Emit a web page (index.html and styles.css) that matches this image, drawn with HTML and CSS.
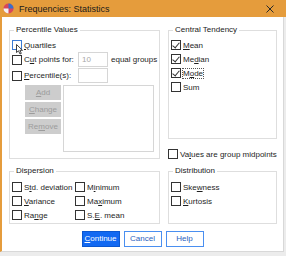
FILE: index.html
```html
<!DOCTYPE html>
<html lang="en">
<head>
    <meta charset="UTF-8">
    <title>Frequencies: Statistics</title>
    <link rel="stylesheet" href="styles.css">
</head>
<body>
<div class="window">
    <!-- 标题栏 -->
    <div class="titlebar">
        <svg class="app-icon" width="11" height="11" viewBox="0 0 11 11">
            <circle cx="5.5" cy="5.5" r="5" fill="#d9465a"/>
            <path d="M5.5 0.5 A5 5 0 0 1 10.5 5.5 L5.5 5.5 Z" fill="#3b6fc9"/>
            <path d="M0.5 5.5 A5 5 0 0 0 5.5 10.5 L5.5 5.5 Z" fill="#f2f2f2"/>
        </svg>
        <span class="title">Frequencies: Statistics</span>
        <svg class="close" width="8" height="8" viewBox="0 0 8 8">
            <path d="M0.5 0.5 L7.5 7.5 M7.5 0.5 L0.5 7.5" stroke="#2a2a2a" stroke-width="1"/>
        </svg>
    </div>

    <div class="content">
        <div class="top">
            <!-- 百分位值 -->
            <fieldset class="group percentile">
                <legend>Percentile Values</legend>
                <div class="row">
                    <span class="box hover"></span><span><u>Q</u>uartiles</span>
                </div>
                <div class="row input-row">
                    <span class="check-label"><span class="box"></span><span>C<u>u</u>t points for:</span></span>
                    <span class="field muted">10</span>
                    <span>equal groups</span>
                </div>
                <div class="row input-row second">
                    <span class="check-label"><span class="box"></span><span><u>P</u>ercentile(s):</span></span>
                    <span class="field"></span>
                </div>
                <div class="list-area">
                    <div class="list-buttons">
                        <span class="btn-disabled"><u>A</u>dd</span>
                        <span class="btn-disabled"><u>C</u>hange</span>
                        <span class="btn-disabled">Re<u>m</u>ove</span>
                    </div>
                    <div class="listbox"></div>
                </div>
            </fieldset>

            <div class="right-col">
                <!-- 集中趋势 -->
                <fieldset class="group central">
                    <legend>Central Tendency</legend>
                    <div class="row"><span class="box checked"></span><span><u>M</u>ean</span></div>
                    <div class="row"><span class="box checked"></span><span>Me<u>d</u>ian</span></div>
                    <div class="row"><span class="box checked"></span><span class="focus">M<u>o</u>de</span></div>
                    <div class="row"><span class="box"></span><span>Sum</span></div>
                </fieldset>
                <div class="row midpoints"><span class="box"></span><span>Va<u>l</u>ues are group midpoints</span></div>
            </div>
        </div>

        <div class="bottom">
            <!-- 离散 -->
            <fieldset class="group dispersion">
                <legend>Dispersion</legend>
                <div class="row"><span class="box"></span><span>S<u>t</u>d. deviation</span></div>
                <div class="row"><span class="box"></span><span>M<u>i</u>nimum</span></div>
                <div class="row"><span class="box"></span><span><u>V</u>ariance</span></div>
                <div class="row"><span class="box"></span><span>Ma<u>x</u>imum</span></div>
                <div class="row"><span class="box"></span><span>Ra<u>n</u>ge</span></div>
                <div class="row"><span class="box"></span><span>S.<u>E</u>. mean</span></div>
            </fieldset>

            <!-- 分布 -->
            <fieldset class="group distribution">
                <legend>Distribution</legend>
                <div class="row"><span class="box"></span><span>Ske<u>w</u>ness</span></div>
                <div class="row"><span class="box"></span><span><u>K</u>urtosis</span></div>
            </fieldset>
        </div>

        <div class="actions">
            <span class="btn primary"><u>C</u>ontinue</span>
            <span class="btn">Cancel</span>
            <span class="btn">Help</span>
        </div>
    </div>

    <!-- 鼠标指针 -->
    <svg class="cursor" width="8" height="11" viewBox="0 0 8 11">
        <path d="M0.5 0.5 L0.5 8.5 L2.5 6.8 L4 10 L5.3 9.4 L3.9 6.3 L6.5 6.3 Z" fill="#fff" stroke="#111" stroke-width="0.8"/>
    </svg>
</div>
</body>
</html>
```

FILE: styles.css
```css
/* 重置样式 */
* {
    margin: 0;
    padding: 0;
    box-sizing: border-box;
}

body {
    width: 286px;
    height: 256px;
    overflow: hidden;
    background: #ececec;
    font-family: "Liberation Sans", Arial, sans-serif;
    font-size: 8px;
    color: #1e1e1e;
}

/* 窗口 */
.window {
    position: relative;
    width: 284px;
    height: 252px;
    margin-left: 0;
    background: #fff;
    border-left: 2px solid #e59c3c;
    border-right: 1px solid #d8d8d8;
    border-bottom: 1px solid #d8d8d8;
}

/* 标题栏 */
.titlebar {
    height: 17px;
    margin-left: -2px;
    width: 288px;
    background: #e59c3c;
    display: flex;
    align-items: center;
    padding-left: 3px;
}

.app-icon {
    flex: none;
}

.title {
    font-size: 9px;
    color: #1a1a1a;
    margin-left: 5px;
    flex: 1;
}

.close {
    margin-right: 14px;
}

/* 内容区域 */
.content {
    padding: 8px 0 0 7px;
}

.top {
    display: grid;
    grid-template-columns: 151px 109px;
    column-gap: 8px;
    align-items: start;
}

/* 分组框 */
.group {
    border: 1px solid #dedede;
    min-width: 0;
    padding: 3px 2px 6px 2px;
}

.group legend {
    line-height: 10px;
    padding: 0 2px;
    margin-left: 2px;
    color: #222;
}

/* 复选框行 */
.row {
    display: flex;
    align-items: center;
    height: 14px;
    white-space: nowrap;
}

.box {
    flex: none;
    width: 10px;
    height: 10px;
    border: 1px solid #333;
    background: #fff;
    margin-right: 2px;
    position: relative;
}

.box.hover {
    border-color: #3a7bd5;
}

.box.checked::after {
    content: "";
    position: absolute;
    left: 2px;
    top: 0;
    width: 3px;
    height: 6px;
    border-right: 1px solid #333;
    border-bottom: 1px solid #333;
    transform: rotate(40deg);
}

.check-label {
    display: flex;
    align-items: center;
}

.input-row {
    display: grid;
    grid-template-columns: 63px 30px auto;
    column-gap: 3px;
    height: 15px;
}

.input-row.second {
    margin-top: 1px;
}

.field {
    height: 15px;
    border: 1px solid #d6d6d6;
    background: #fff;
    padding: 0 3px;
    line-height: 13px;
}

.field.muted {
    color: #a8a8a8;
}

/* 列表与按钮 */
.list-area {
    display: flex;
    margin-top: 2px;
    margin-left: 13px;
}

.list-buttons {
    display: flex;
    flex-direction: column;
    gap: 2px;
    width: 36px;
    margin-right: 2px;
}

.btn-disabled {
    height: 15px;
    background: #cdcdcd;
    color: #9c9c9c;
    text-align: center;
    line-height: 15px;
}

.listbox {
    width: 91px;
    height: 67px;
    border: 1px solid #d6d6d6;
}

/* 右侧列 */
.central {
    padding-bottom: 44px;
}

.midpoints {
    margin-top: 8px;
}

.focus {
    outline: 1px dotted #555;
    outline-offset: 0;
}

/* 下方分组 */
.bottom {
    display: grid;
    grid-template-columns: 151px 109px;
    column-gap: 8px;
    margin-top: 5px;
}

.bottom .group {
    padding: 4px 2px 1px 2px;
}

.dispersion {
    display: grid;
    grid-template-columns: 63px auto;
}

/* 底部按钮 */
.actions {
    display: flex;
    justify-content: center;
    gap: 4px;
    margin-top: 7px;
    padding-right: 7px;
}

.btn {
    width: 38px;
    height: 16px;
    border: 1px solid #4a8ff0;
    color: #2a62c0;
    background: #fff;
    text-align: center;
    line-height: 14px;
}

.btn.primary {
    background: #1269f2;
    border-color: #0b57d0;
    color: #fff;
}

/* 鼠标指针 */
.cursor {
    position: absolute;
    left: 14px;
    top: 44px;
}
```
